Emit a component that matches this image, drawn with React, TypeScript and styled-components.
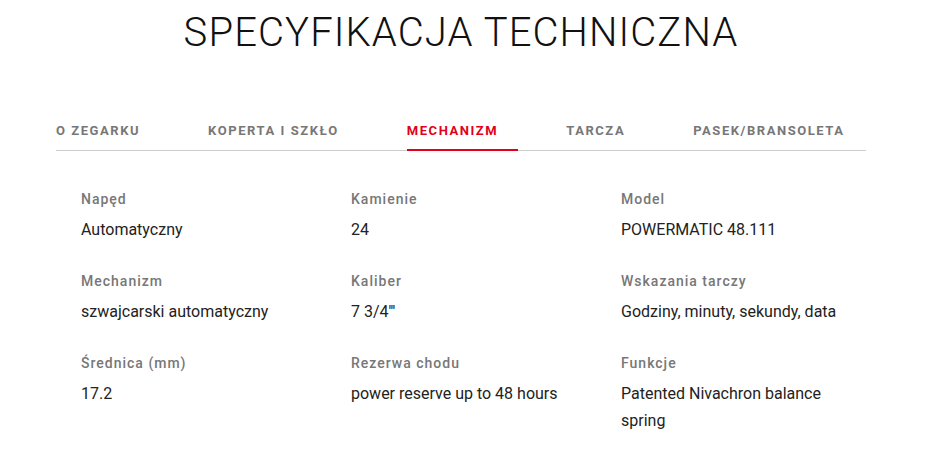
import React from "react";
import styled, { createGlobalStyle } from "styled-components";

const GlobalStyle = createGlobalStyle`
	body {
		margin: 0;
		background: #ffffff;
		font-family: Roboto, "Liberation Sans", sans-serif;
	}
`;

const tabs = ["O zegarku", "Koperta i szkło", "Mechanizm", "Tarcza", "Pasek/bransoleta"];

const specs = [
	{ label: "Napęd", value: "Automatyczny" },
	{ label: "Kamienie", value: "24" },
	{ label: "Model", value: "POWERMATIC 48.111" },
	{ label: "Mechanizm", value: "szwajcarski automatyczny" },
	{ label: "Kaliber", value: "7 3/4'''" },
	{ label: "Wskazania tarczy", value: "Godziny, minuty, sekundy, data" },
	{ label: "Średnica (mm)", value: "17.2" },
	{ label: "Rezerwa chodu", value: "power reserve up to 48 hours" },
	{ label: "Funkcje", value: "Patented Nivachron balance spring" },
];

export default function App() {
	return (
		<>
			<GlobalStyle />
			<Page>
				<Title>Specyfikacja techniczna</Title>
				<TabBar>
					{tabs.map((tab) => (
						<Tab key={tab} $active={tab === "Mechanizm"}>
							{tab}
						</Tab>
					))}
				</TabBar>
				<SpecGrid>
					{specs.map((spec) => (
						<SpecItem key={spec.label}>
							<div className="label">{spec.label}</div>
							<div className="value">{spec.value}</div>
						</SpecItem>
					))}
				</SpecGrid>
			</Page>
		</>
	);
}

const Page = styled.div`
	width: 810px;
	margin-left: 56px;
	padding-top: 9px;
`;

const Title = styled.h1`
	margin: 0;
	text-align: center;
	font-size: 40px;
	line-height: 48px;
	font-weight: 300;
	letter-spacing: 1.1px;
	text-transform: uppercase;
	color: #111111;
`;

const TabBar = styled.div`
	display: flex;
	gap: 48px;
	margin-top: 66px;
	border-bottom: 1px solid #cccccc;
`;

const Tab = styled.div<{ $active?: boolean }>`
	padding: 0 20px 10px 0;
	margin-bottom: -1px;
	font-size: 13px;
	line-height: 16px;
	font-weight: 700;
	letter-spacing: 1.55px;
	text-transform: uppercase;
	white-space: nowrap;
	color: ${(p) => (p.$active ? "#e2001a" : "#777777")};
	border-bottom: 2px solid ${(p) => (p.$active ? "#e2001a" : "transparent")};
`;

const SpecGrid = styled.div`
	display: grid;
	grid-template-columns: repeat(3, 270px);
	row-gap: 28px;
	padding: 38px 0 0 25px;
`;

const SpecItem = styled.div`
	padding-right: 35px;

	.label {
		font-size: 14px;
		line-height: 20px;
		font-weight: 500;
		letter-spacing: 1px;
		color: #777777;
		margin-bottom: 7px;
	}

	.value {
		font-size: 16px;
		line-height: 27px;
		color: #222222;
	}
`;
